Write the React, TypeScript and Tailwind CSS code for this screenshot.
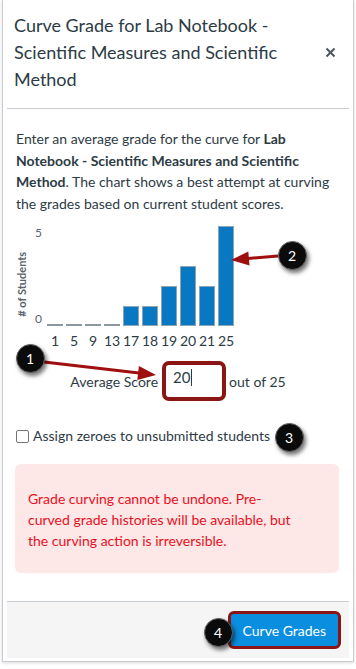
import React from "react";

const bars = [
  { label: "1", value: 0 },
  { label: "5", value: 0 },
  { label: "9", value: 0 },
  { label: "13", value: 0 },
  { label: "17", value: 1 },
  { label: "18", value: 1 },
  { label: "19", value: 2 },
  { label: "20", value: 3 },
  { label: "21", value: 2 },
  { label: "25", value: 5 },
];

function Callout({ n, x, y }: { n: number; x: number; y: number }) {
  return (
    <div
      className="absolute flex h-[29px] w-[29px] items-center justify-center rounded-full border border-[#666] bg-[#0b0b0b] text-[14px] text-white shadow-[2px_3px_4px_rgba(0,0,0,0.55)]"
      style={{ left: x - 14.5, top: y - 14.5 }}
    >
      {n}
    </div>
  );
}

export default function App() {
  return (
    <div
      className="relative h-[669px] w-[356px] overflow-hidden bg-white text-[#2d3b45]"
      style={{ fontFamily: "Lato, 'Open Sans', sans-serif" }}
    >
      <div className="ml-[2px] w-[352px] border border-t-0 border-[#c7cdd1] px-[4px] pb-[3px] shadow-[0_1px_3px_rgba(0,0,0,0.15)]">
        {/* Header */}
        <div className="flex items-center justify-between border-b border-[#c7cdd1] px-[7px] pb-[15px] pt-[12px]">
          <h2 className="w-[290px] text-[18px] font-normal leading-[27px]">
            Curve Grade for Lab Notebook - Scientific Measures and Scientific Method
          </h2>
          <svg width="11" height="11" viewBox="0 0 11 11" className="mr-[6px]">
            <path d="M1.5 1.5 L9.5 9.5 M9.5 1.5 L1.5 9.5" stroke="#4a5660" strokeWidth="2" />
          </svg>
        </div>

        {/* Body */}
        <div className="px-[9px] pb-[28px] pt-[19px]">
          <p className="text-[14px] leading-[21.5px]">
            Enter an average grade for the curve for{" "}
            <span className="font-bold">Lab Notebook - Scientific Measures and Scientific Method</span>. The
            chart shows a best attempt at curving the grades based on current student scores.
          </p>

          {/* Chart */}
          <div className="mt-[12px] flex">
            <div className="flex h-[100px] w-[12px] items-center justify-center pt-[16px]">
              <span className="-rotate-90 whitespace-nowrap text-[11px] font-bold text-[#5a656d]">
                # of Students
              </span>
            </div>
            <div className="flex h-[100px] w-[19px] flex-col justify-between pl-[7px] text-[12px] leading-[14px] text-[#5a656d]">
              <span>5</span>
              <span>0</span>
            </div>
            <div>
              <div className="flex h-[100px] items-end gap-[3px]">
                {bars.map((b) =>
                  b.value === 0 ? (
                    <div key={b.label} className="h-[2px] w-[16px] bg-[#8d979e]" />
                  ) : (
                    <div
                      key={b.label}
                      className="w-[16px] border border-[#8fa3b1] bg-[#0878c2]"
                      style={{ height: b.value * 20 }}
                    />
                  )
                )}
              </div>
              <div className="mt-[6px] flex gap-[3px] text-[14px] leading-[18px]">
                {bars.map((b) => (
                  <div key={b.label} className="flex w-[16px] justify-center">
                    <span className="whitespace-nowrap">{b.label}</span>
                  </div>
                ))}
              </div>
            </div>
          </div>

          {/* Average score */}
          <div className="mt-[11px] flex items-center justify-center text-[14px]">
            <span>Average Score</span>
            <div className="ml-[4px] flex h-[40px] w-[64px] items-center rounded-[7px] border-[4px] border-[#8b1515] pb-[8px] pl-[7px] text-[15px]">
              20<span className="ml-[1px] inline-block h-[17px] w-[1px] bg-[#2d3b45]" />
            </div>
            <span className="ml-[3px]">out of 25</span>
          </div>

          {/* Checkbox */}
          <label className="mt-[25px] flex items-center gap-[4px] text-[14px] leading-[20px]">
            <span className="inline-block h-[13px] w-[13px] rounded-[2px] border border-[#767676] bg-white" />
            Assign zeroes to unsubmitted students
          </label>

          {/* Alert */}
          <div className="ml-[-1px] mr-[1px] mt-[18px] rounded-[6px] bg-[#fde7e7] pb-[22px] pl-[13px] pt-[24px]">
            <p className="w-[268px] text-[14px] leading-[21px] text-[#e8101d]">
              Grade curving cannot be undone. Pre-curved grade histories will be available, but the curving
              action is irreversible.
            </p>
          </div>
        </div>

        {/* Footer */}
        <div className="flex h-[57px] items-center justify-end border-t border-[#c7cdd1] bg-[#f5f5f5] pr-[8px]">
          <button className="h-[38px] rounded-[6px] border-[3px] border-[#8b1515] bg-[#0a8ee0] px-[12px] text-[14px] text-white">
            Curve Grades
          </button>
        </div>
      </div>

      {/* Annotation arrows */}
      <svg className="pointer-events-none absolute left-0 top-0" width="356" height="669">
        <line x1="44" y1="362" x2="139" y2="373" stroke="#a00f0f" strokeWidth="3" />
        <polygon points="156,375 137.3,379.9 138.9,366" fill="#a00f0f" />
        <line x1="278" y1="256" x2="248" y2="258.5" stroke="#a00f0f" strokeWidth="3" />
        <polygon points="231,260 248.3,251.5 249.5,265.4" fill="#a00f0f" />
      </svg>

      <Callout n={1} x={30} y={358} />
      <Callout n={2} x={292} y={255} />
      <Callout n={3} x={289} y={437} />
      <Callout n={4} x={218} y={632} />
    </div>
  );
}
